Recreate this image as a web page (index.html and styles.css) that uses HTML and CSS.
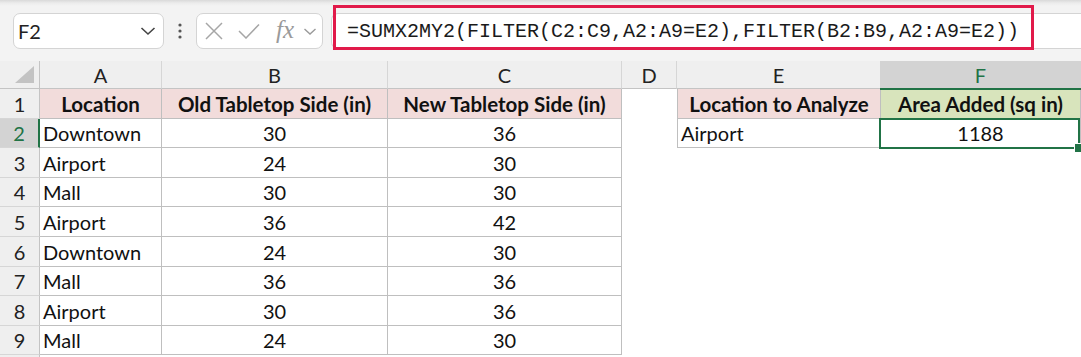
FILE: index.html
```html
<!DOCTYPE html>
<html lang="en">
<head>
<meta charset="utf-8">
<title>SUMX2MY2</title>
<link rel="stylesheet" href="styles.css">
</head>
<body>
<div class="app">
  <div class="toolbar">
    <div class="namebox">
      <span class="ref">F2</span>
      <svg class="chev" width="16" height="10" viewBox="0 0 16 10"><path d="M1.5 2 L8 8 L14.5 2" fill="none" stroke="#444" stroke-width="1.6"/></svg>
    </div>
    <div class="dots">
      <svg width="4" height="16" viewBox="0 0 4 16"><circle cx="2" cy="2" r="1.6" fill="#555"/><circle cx="2" cy="8" r="1.6" fill="#555"/><circle cx="2" cy="14" r="1.6" fill="#555"/></svg>
    </div>
    <div class="fnbox">
      <svg class="ico-x" width="18" height="18" viewBox="0 0 18 18"><path d="M1 1 L17 17 M17 1 L1 17" stroke="#a6a6a6" stroke-width="1.5" fill="none"/></svg>
      <svg class="ico-ok" width="22" height="16" viewBox="0 0 22 16"><path d="M1 8 L8 15 L21 1.5" stroke="#a6a6a6" stroke-width="1.5" fill="none"/></svg>
      <span class="fx">fx</span>
      <svg class="chev-s" width="14" height="9" viewBox="0 0 14 9"><path d="M1.5 2 L7 7 L12.5 2" fill="none" stroke="#9a9a9a" stroke-width="1.4"/></svg>
    </div>
    <div class="formula"><span class="ftext">=SUMX2MY2(FILTER(C2:C9,A2:A9=E2),FILTER(B2:B9,A2:A9=E2))</span></div>
    <div class="annot"></div>
  </div>

  <div class="sheet">
    <div class="ch corner"><svg width="20" height="18" viewBox="0 0 20 18"><path d="M19 0 L19 17 L0 17 Z" fill="#c3c3c3"/></svg></div>
    <div class="ch">A</div>
    <div class="ch">B</div>
    <div class="ch">C</div>
    <div class="ch">D</div>
    <div class="ch">E</div>
    <div class="ch ch-sel">F</div>

    <div class="rh">1</div>
    <div class="b h">Location</div>
    <div class="b h">Old Tabletop Side (in)</div>
    <div class="b h">New Tabletop Side (in)</div>
    <div class="e"></div>
    <div class="b h bl">Location to Analyze</div>
    <div class="b g">Area Added (sq in)</div>

    <div class="rh rh-sel">2</div>
    <div class="b t">Downtown</div>
    <div class="b n">30</div>
    <div class="b n">36</div>
    <div class="e"></div>
    <div class="b t bl">Airport</div>
    <div class="b n sel">1188</div>

    <div class="rh">3</div>
    <div class="b t">Airport</div>
    <div class="b n">24</div>
    <div class="b n">30</div>
    <div class="e"></div><div class="e"></div><div class="e"></div>

    <div class="rh">4</div>
    <div class="b t">Mall</div>
    <div class="b n">30</div>
    <div class="b n">30</div>
    <div class="e"></div><div class="e"></div><div class="e"></div>

    <div class="rh">5</div>
    <div class="b t">Airport</div>
    <div class="b n">36</div>
    <div class="b n">42</div>
    <div class="e"></div><div class="e"></div><div class="e"></div>

    <div class="rh">6</div>
    <div class="b t">Downtown</div>
    <div class="b n">24</div>
    <div class="b n">30</div>
    <div class="e"></div><div class="e"></div><div class="e"></div>

    <div class="rh">7</div>
    <div class="b t">Mall</div>
    <div class="b n">36</div>
    <div class="b n">36</div>
    <div class="e"></div><div class="e"></div><div class="e"></div>

    <div class="rh">8</div>
    <div class="b t">Airport</div>
    <div class="b n">30</div>
    <div class="b n">36</div>
    <div class="e"></div><div class="e"></div><div class="e"></div>

    <div class="rh">9</div>
    <div class="b t">Mall</div>
    <div class="b n">24</div>
    <div class="b n">30</div>
    <div class="e"></div><div class="e"></div><div class="e"></div>

    <div class="rh"></div>
    <div class="e"></div><div class="e"></div><div class="e"></div><div class="e"></div><div class="e"></div><div class="e"></div>
  </div>
</div>
</body>
</html>
```

FILE: styles.css
```css
* { box-sizing: border-box; }
html, body { margin: 0; padding: 0; background: #fff; }
body { width: 1081px; height: 357px; overflow: hidden; font-family: Lato, "Liberation Sans", sans-serif; color: #111; }

.app { width: 1081px; }

.toolbar {
  position: relative;
  height: 61px;
  background: linear-gradient(#d9d9d9 0, #ececec 3px, #f3f3f3 6px, #f3f3f3 100%);
  display: flex;
  align-items: flex-start;
  padding: 13px 0 0 13px;
}

.namebox {
  width: 151px;
  height: 36px;
  background: #fff;
  border: 1px solid #d4d4d4;
  border-radius: 7px;
  display: flex;
  align-items: center;
  justify-content: space-between;
  padding: 0 7px 0 4px;
}
.ref { font-size: 20px; color: #222; }

.dots {
  width: 32px;
  height: 36px;
  display: flex;
  align-items: center;
  justify-content: center;
  padding-right: 1px;
}

.fnbox {
  width: 127px;
  height: 36px;
  background: #fff;
  border: 1px solid #d4d4d4;
  border-radius: 7px;
  display: flex;
  align-items: center;
  padding-left: 8px;
}
.ico-x { margin-right: 15px; }
.ico-ok { margin-right: 16px; }
.fx {
  font-family: "Liberation Serif", "DejaVu Serif", serif;
  font-style: italic;
  font-size: 25px;
  color: #9a9a9a;
  margin-right: 9px;
  line-height: 1;
  margin-top: -3px;
}

.formula {
  margin-left: 8px;
  flex: 1;
  height: 36px;
  background: #fff;
  border: 1px solid #d4d4d4;
  border-right: none;
  border-radius: 7px 0 0 7px;
  display: flex;
  align-items: center;
  padding-left: 15px;
}
.ftext {
  font-family: "Liberation Mono", "DejaVu Sans Mono", monospace;
  font-size: 20px;
  color: #1a1a1a;
  white-space: nowrap;
}

.annot {
  position: absolute;
  left: 333px;
  top: 5px;
  width: 701px;
  height: 45px;
  border: 3px solid #e11a4a;
}

.sheet {
  display: grid;
  grid-template-columns: 40px 122px 226px 234px 55px 204px 200px;
  grid-template-rows: 28px 30px 29px 30px 29px 30px 30px 29px 30px 29px 30px;
}

.ch {
  background: #efefef;
  border-right: 1px solid #d6d6d6;
  border-bottom: 1px solid #c4c4c4;
  font-size: 20px;
  color: #222;
  display: flex;
  align-items: center;
  justify-content: center;
  padding-top: 1px;
}
.corner { justify-content: flex-end; align-items: flex-end; padding: 0 4px 4px 0; border-right-color: #c4c4c4; }
.ch-sel {
  background: #d3d3d3;
  color: #217346;
  border-bottom: 2px solid #217346;
  border-right: none;
  margin-left: -1px;
  margin-bottom: -1px;
  position: relative;
  z-index: 2;
}

.rh {
  background: #efefef;
  border-right: 1px solid #c4c4c4;
  border-bottom: 1px solid #d6d6d6;
  font-size: 20px;
  color: #222;
  display: flex;
  align-items: center;
  justify-content: center;
}
.rh-sel {
  background: #d3d3d3;
  color: #217346;
  border-right: 2px solid #217346;
}

.e { background: #fff; }

.b {
  border-right: 1px solid #bfbfbf;
  border-bottom: 1px solid #bfbfbf;
  font-size: 20px;
  display: flex;
  align-items: center;
  white-space: nowrap;
  background: #fff;
  color: #111;
}
.bl { border-left: 1px solid #bfbfbf; }
.h { background: #f2dcdb; font-weight: 700; justify-content: center; font-size: 20.5px; }
.g { background: #d8e4bc; font-weight: 700; justify-content: center; font-size: 20.5px; }
.t { padding-left: 3px; }
.n { justify-content: center; }

.sel { position: relative; }
.sel::after {
  content: "";
  position: absolute;
  left: -2px;
  top: -1px;
  right: 0;
  bottom: -2px;
  border: 2px solid #217346;
  z-index: 3;
}
.sel::before {
  content: "";
  position: absolute;
  right: -4px;
  bottom: -6px;
  width: 8px;
  height: 8px;
  background: #217346;
  border: 1px solid #fff;
  z-index: 4;
}
```
